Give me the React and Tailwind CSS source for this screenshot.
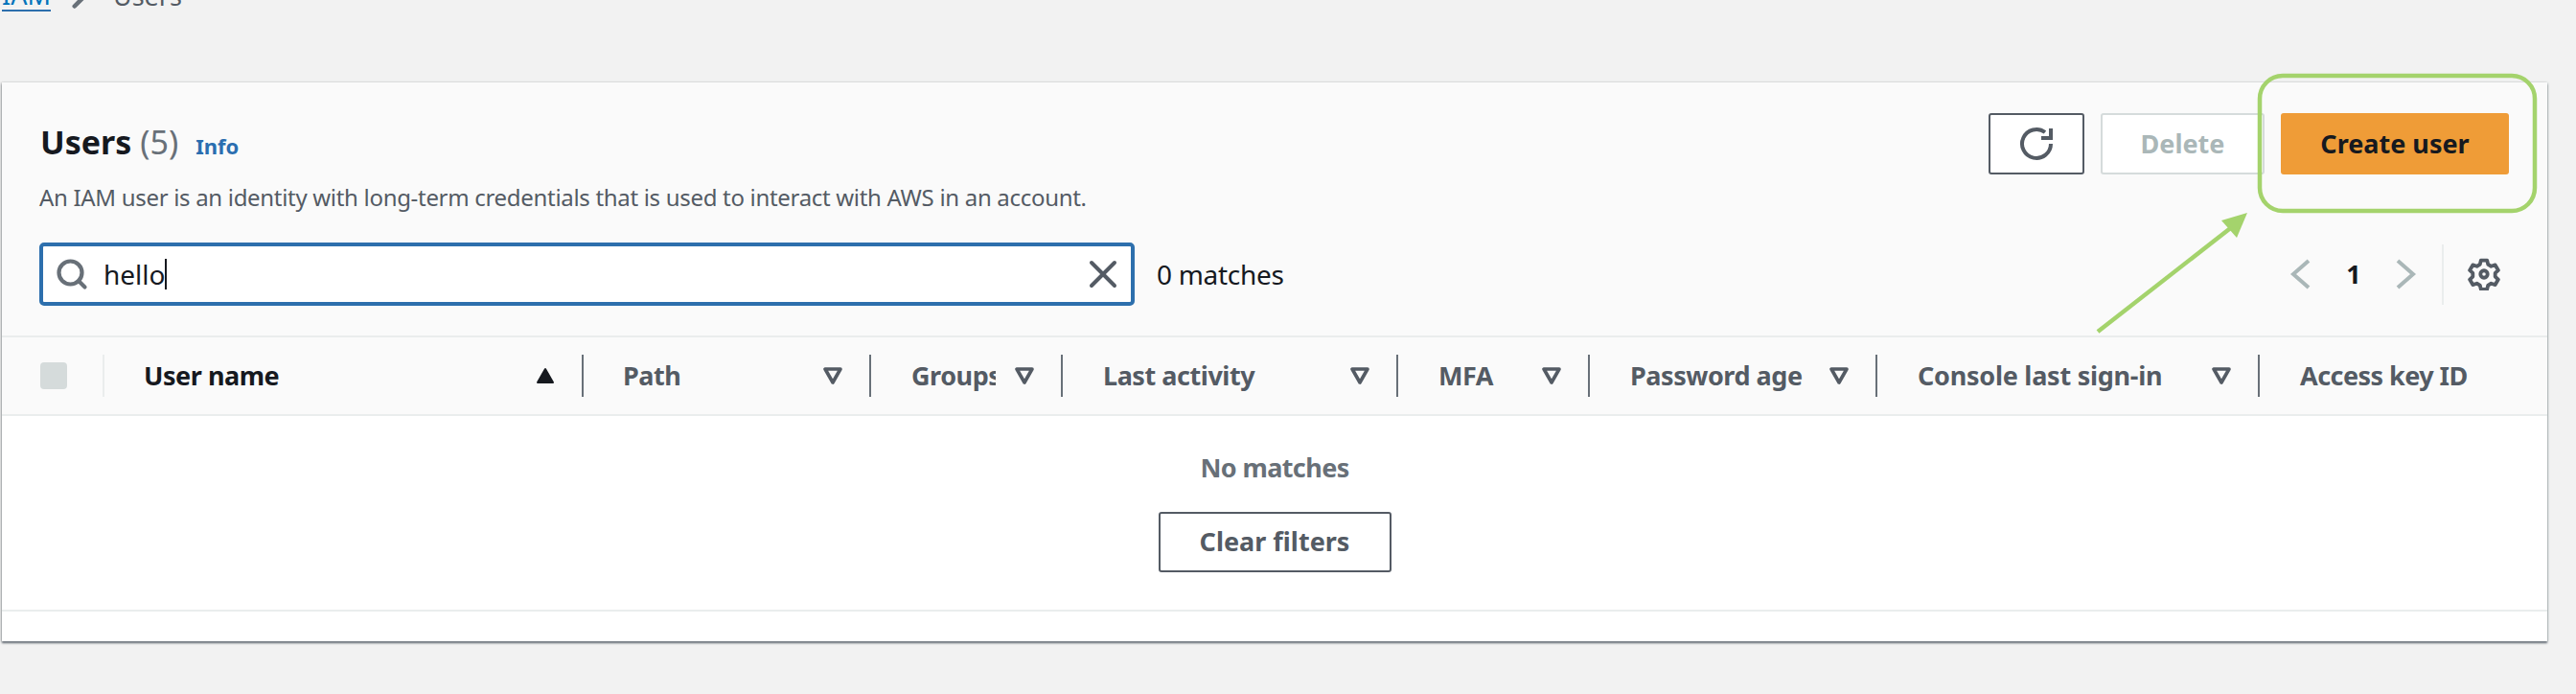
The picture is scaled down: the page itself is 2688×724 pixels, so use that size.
import { ChevronRight, Search, X } from "lucide-react"

const columns = [
  { label: "User name", width: "w-[500px]", text: "text-[#16191f]", sorted: true, pad: "pl-[41px]" },
  { label: "Path", width: "w-[300px]", pad: "pl-[41px]" },
  { label: "Groups", width: "w-[200px]", clip: true },
  { label: "Last activity", width: "w-[350px]" },
  { label: "MFA", width: "w-[200px]" },
  { label: "Password age", width: "w-[300px]" },
  { label: "Console last sign-in", width: "w-[399px]", track: "tracking-[-0.25px]" },
]

function FilterCaret() {
  return (
    <svg viewBox="0 0 20 20" className="h-[20px] w-[20px] shrink-0" fill="none" stroke="#545b64" strokeWidth="3.6" strokeLinejoin="round">
      <path d="M2 3h16l-8 14z" />
    </svg>
  )
}

function SortCaret() {
  return (
    <svg viewBox="0 0 20 20" className="h-[20px] w-[20px] shrink-0" fill="#16191f" stroke="#16191f" strokeWidth="2" strokeLinejoin="round">
      <path d="M2 17h16L10 3z" />
    </svg>
  )
}

function PagerArrow({ flip }) {
  return (
    <svg viewBox="0 0 24 34" className={`h-[34px] w-[24px] ${flip ? "rotate-180" : ""}`} fill="none" stroke="#aab7b8" strokeWidth="4">
      <path d="M21 3L5 17l16 14" />
    </svg>
  )
}

function RefreshIcon() {
  return (
    <svg viewBox="0 0 36 36" className="h-[36px] w-[36px]" fill="none" stroke="#545b64" strokeWidth="4">
      <path d="M33 18a15 15 0 1 1-6-12" />
      <path d="M33 2v10H23" />
    </svg>
  )
}

function GearIcon() {
  return (
    <svg viewBox="0 0 32 32" className="h-[34px] w-[34px]" fill="none" stroke="#545b64" strokeWidth="3.6" strokeLinejoin="round">
      <path d="M13 2.5h6l1 4 3 1.7 4-1.2 3 5.2-3 2.8v3.4l3 2.8-3 5.2-4-1.2-3 1.7-1 4h-6l-1-4-3-1.7-4 1.2-3-5.2 3-2.8v-3.4l-3-2.8 3-5.2 4 1.2 3-1.7z" />
      <circle cx="16" cy="16" r="3.5" />
    </svg>
  )
}

function HeaderCell({ col }) {
  return (
    <div className={`flex h-[44px] items-center justify-between border-r-2 border-[#687078] pr-[28px] ${col.pad || "pl-[42px]"} ${col.width}`}>
      <span className={`text-[27px] font-bold whitespace-nowrap ${col.track || "tracking-[-0.45px]"} ${col.text || "text-[#545b64]"} ${col.clip ? "w-[88px] overflow-hidden" : ""}`}>
        {col.label}
      </span>
      {col.sorted ? <SortCaret /> : <FilterCaret />}
    </div>
  )
}

export default function App() {
  return (
    <div className="relative h-[724px] overflow-hidden bg-[#f2f2f2] font-['Noto_Sans',sans-serif]">
      {/* breadcrumb, cut off by the top of the crop */}
      <div className="h-[86px] overflow-hidden">
        <div className="-mt-[25px] flex items-center pl-[2px] text-[27px] leading-[30px] text-[#545b64]">
          <a className="border-b-2 border-[#2d6fad] text-[#0073bb]">IAM</a>
          <ChevronRight size={42} strokeWidth={2.6} color="#687078" className="ml-[9px]" />
          <span className="ml-[14px]">Users</span>
        </div>
      </div>

      <div className="ml-[2px] h-[583px] w-[2656px] bg-white shadow-[0_2px_2px_#687078,-1px_0_2px_#c5c5c5,1px_0_2px_#d5dbdb]">
        <div className="h-[266px] border-b-2 border-[#eaeded] bg-[#fafafa] pr-[40px] pl-[39px] pt-[32px]">
          <div className="flex justify-between">
            <div>
              <div className="flex items-baseline pl-[1px]">
                <h1 className="text-[34px] leading-[60px] font-bold text-[#16191f]">Users</h1>
                <span className="ml-[9px] text-[34px] text-[#687078]">(5)</span>
                <a className="ml-[18px] text-[22px] font-bold text-[#2a6eb0]">Info</a>
              </div>
              <p className="mt-[12px] text-[24px] leading-[32px] tracking-[-0.31px] text-[#545b64]">
                An IAM user is an identity with long-term credentials that is used to interact with AWS in an account.
              </p>
            </div>
            <div className="flex gap-[17px]">
              <button className="flex h-[64px] w-[100px] items-center justify-center rounded-[3px] border-2 border-[#545b64] bg-white">
                <RefreshIcon />
              </button>
              <button className="h-[64px] w-[171px] rounded-[3px] border-2 border-[#d5dbdb] bg-white text-[27px] font-bold text-[#aab7b8]">
                Delete
              </button>
              <button className="h-[64px] w-[238px] rounded-[3px] bg-[#ef9c37] text-[27px] font-bold text-[#16191f]">
                Create user
              </button>
            </div>
          </div>

          <div className="mt-[31px] flex items-center">
            <div className="flex h-[66px] w-[1143px] items-center rounded-[5px] border-[4px] border-[#2d6fad] bg-white pl-[12px] pr-[5px]">
              <Search size={36} strokeWidth={2.8} color="#687078" className="shrink-0" />
              <span className="ml-[15px] border-r-2 border-[#16191f] text-[28px] leading-[32px] text-[#16191f]">hello</span>
              <X size={48} strokeWidth={2} color="#545b64" className="ml-auto" />
            </div>
            <span className="ml-[23px] text-[28px] tracking-[-0.3px] text-[#16191f]">0 matches</span>
            <div className="ml-auto flex items-center pr-[9px]">
              <PagerArrow />
              <span className="ml-[29px] w-[30px] text-center text-[27px] font-bold text-[#16191f]">1</span>
              <div className="ml-[28px]"><PagerArrow flip /></div>
              <div className="ml-[25px] h-[63px] w-[2px] bg-[#eaeded]" />
              <div className="ml-[25px]"><GearIcon /></div>
            </div>
          </div>
        </div>

        <div className="flex h-[82px] items-center border-b-2 border-[#eaeded] bg-[#fafafa]">
          <div className="flex h-[44px] w-[107px] items-center border-r-2 border-[#eaeded] pl-[40px]">
            <div className="h-[28px] w-[28px] rounded-[4px] bg-[#d5dbdb]" />
          </div>
          {columns.map((col) => (
            <HeaderCell key={col.label} col={col} />
          ))}
          <span className="pl-[42px] text-[27px] font-bold tracking-[-0.55px] whitespace-nowrap text-[#545b64]">Access key ID</span>
        </div>

        <div className="flex h-[204px] flex-col items-center border-b-2 border-[#eaeded] pt-[34px]">
          <p className="text-[27px] leading-[40px] font-bold tracking-[-0.6px] text-[#687078]">No matches</p>
          <button className="mt-[26px] h-[63px] w-[243px] rounded-[3px] border-2 border-[#545b64] bg-white text-[27px] font-bold text-[#545b64]">
            Clear filters
          </button>
        </div>
      </div>

      {/* green annotation drawn over the screenshot */}
      <svg className="absolute top-0 left-0 h-[724px] w-[2688px]" viewBox="0 0 2688 724" fill="none">
        <rect x="2358" y="79" width="287" height="141" rx="24" stroke="#a4d36c" strokeWidth="4.5" />
        <path d="M2189 346L2330 236" stroke="#a4d36c" strokeWidth="4.5" />
        <path d="M2345 222L2318 230L2334 248z" fill="#a4d36c" />
      </svg>
    </div>
  )
}
